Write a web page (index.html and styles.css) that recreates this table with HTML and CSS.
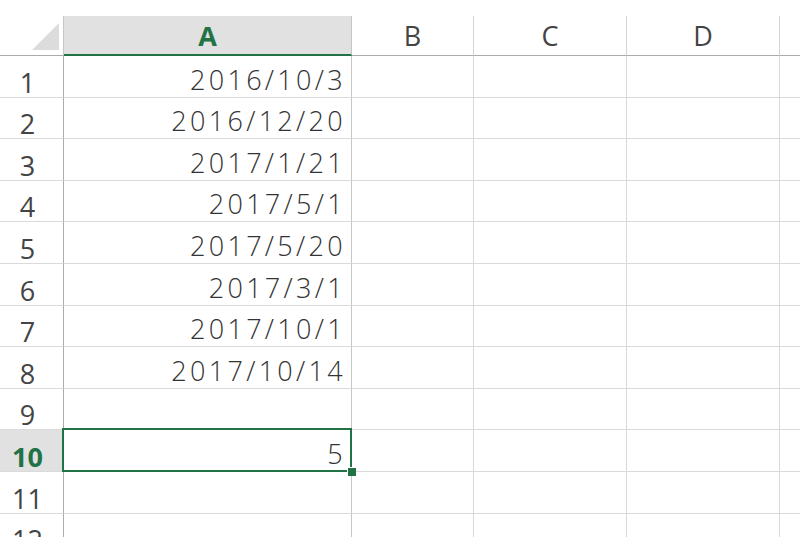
FILE: index.html
```html
<!DOCTYPE html>
<html>
<head>
<meta charset="utf-8">
<link rel="stylesheet" href="styles.css">
</head>
<body>
<div class="sheet">
  <div class="grid">
    <div class="corner"><span class="tri"></span></div>
    <div class="colhead active">A</div>
    <div class="colhead">B</div>
    <div class="colhead">C</div>
    <div class="colhead">D</div>
    <div class="colhead last"></div>

    <div class="rowhead">1</div><div class="cell num">2016/10/3</div><div class="cell"></div><div class="cell"></div><div class="cell"></div><div class="cell last"></div>
    <div class="rowhead">2</div><div class="cell num">2016/12/20</div><div class="cell"></div><div class="cell"></div><div class="cell"></div><div class="cell last"></div>
    <div class="rowhead">3</div><div class="cell num">2017/1/21</div><div class="cell"></div><div class="cell"></div><div class="cell"></div><div class="cell last"></div>
    <div class="rowhead">4</div><div class="cell num">2017/5/1</div><div class="cell"></div><div class="cell"></div><div class="cell"></div><div class="cell last"></div>
    <div class="rowhead">5</div><div class="cell num">2017/5/20</div><div class="cell"></div><div class="cell"></div><div class="cell"></div><div class="cell last"></div>
    <div class="rowhead">6</div><div class="cell num">2017/3/1</div><div class="cell"></div><div class="cell"></div><div class="cell"></div><div class="cell last"></div>
    <div class="rowhead">7</div><div class="cell num">2017/10/1</div><div class="cell"></div><div class="cell"></div><div class="cell"></div><div class="cell last"></div>
    <div class="rowhead">8</div><div class="cell num">2017/10/14</div><div class="cell"></div><div class="cell"></div><div class="cell"></div><div class="cell last"></div>
    <div class="rowhead">9</div><div class="cell num"></div><div class="cell"></div><div class="cell"></div><div class="cell"></div><div class="cell last"></div>
    <div class="rowhead selrow">10</div><div class="cell num selected">5<span class="sel-border"></span><span class="handle"></span></div><div class="cell"></div><div class="cell"></div><div class="cell"></div><div class="cell last"></div>
    <div class="rowhead">11</div><div class="cell num"></div><div class="cell"></div><div class="cell"></div><div class="cell"></div><div class="cell last"></div>
    <div class="rowhead">12</div><div class="cell num"></div><div class="cell"></div><div class="cell"></div><div class="cell"></div><div class="cell last"></div>
  </div>
</div>
</body>
</html>
```

FILE: styles.css
```css
html, body {
  margin: 0;
  padding: 0;
  background: #ffffff;
  overflow: hidden;
}

.sheet {
  padding-top: 16px;
  width: 800px;
  height: 521px;
  overflow: hidden;
  font-family: "Open Sans", "Liberation Sans", sans-serif;
}

.grid {
  display: grid;
  grid-template-columns: 64px 288px 122px 153px 153px 40px;
  grid-template-rows: 40px repeat(12, 41.6px);
  width: 820px;
}

.corner {
  position: relative;
  border-right: 1px solid #c6c6c6;
  border-bottom: 1px solid #ababab;
  box-sizing: border-box;
}

.tri {
  position: absolute;
  left: 32px;
  top: 7px;
  width: 0;
  height: 0;
  border-style: solid;
  border-width: 0 0 27px 27px;
  border-color: transparent transparent #dcdcdc transparent;
}

.colhead {
  box-sizing: border-box;
  border-right: 1px solid #d4d4d4;
  border-bottom: 1px solid #ababab;
  display: flex;
  align-items: flex-end;
  justify-content: center;
  font-size: 27px;
  line-height: 27px;
  padding-bottom: 6px;
  color: #444444;
}

.colhead.active {
  background: #e1e1e1;
  border-right-color: #c6c6c6;
  border-bottom: 2px solid #217346;
  color: #217346;
  font-weight: 700;
  padding-bottom: 5px;
}

.rowhead {
  box-sizing: border-box;
  border-right: 1px solid #ababab;
  border-bottom: 1px solid #dadada;
  display: flex;
  align-items: flex-end;
  justify-content: center;
  padding-right: 8px;
  padding-bottom: 1px;
  font-size: 27px;
  line-height: 27px;
  color: #444444;
}

.rowhead.selrow {
  background: #e1e1e1;
  color: #217346;
  font-weight: 700;
}

.cell {
  box-sizing: border-box;
  border-right: 1px solid #dadada;
  border-bottom: 1px solid #dadada;
}

.cell.num {
  display: flex;
  align-items: flex-end;
  justify-content: flex-end;
  padding-right: 5px;
  padding-bottom: 4px;
  font-size: 27px;
  line-height: 27px;
  letter-spacing: 3.3px;
  font-weight: 300;
  color: #333333;
  border-right-color: #c6c6c6;
}

.cell.selected {
  position: relative;
}

.sel-border {
  position: absolute;
  left: -2px;
  top: -2px;
  right: -1px;
  bottom: -1px;
  border: 2px solid #217346;
}

.handle {
  position: absolute;
  right: -5px;
  bottom: -5px;
  width: 8px;
  height: 8px;
  background: #217346;
  border: 1px solid #ffffff;
  border-right: none;
  border-bottom: none;
}
```
